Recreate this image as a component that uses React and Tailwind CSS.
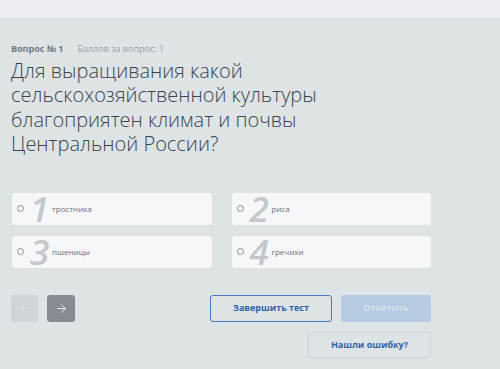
import { ArrowLeft, ArrowRight } from "lucide-react";

const options = [
  { n: "1", text: "тростника" },
  { n: "2", text: "риса" },
  { n: "3", text: "пшеницы" },
  { n: "4", text: "гречихи" },
];

function Option({ n, text }) {
  return (
    <div className="flex h-[32px] items-center rounded-[3px] bg-[#f6f7f8] pl-[5px]">
      <span className="h-[7px] w-[7px] rounded-full border border-[#8a9096]" />
      <span className="ml-[6px] w-[17px] text-center text-[35px] italic font-semibold leading-[30px] text-[#c4c8cc]">
        {n}
      </span>
      <span className="ml-[5px] text-[8px] text-[#6a7076]">{text}</span>
    </div>
  );
}

export default function App() {
  return (
    <div
      className="h-[369px] w-[500px] overflow-hidden bg-[#dee3e6]"
      style={{ fontFamily: '"Open Sans", "Liberation Sans", sans-serif' }}
    >
      {/* top strip */}
      <div className="h-[19px] border-b border-[#d6dbe0] bg-[#ebeef2]" />

      <div className="px-[11px] pt-[23px]">
        <div className="flex items-center gap-[14px] text-[9px]">
          <span className="font-bold text-[#737a82]">Вопрос № 1</span>
          <span className="text-[#9aa0a6]">Баллов за вопрос: 1</span>
        </div>

        <h1 className="mt-[3px] text-[20px] font-light leading-[24.5px] text-[#3b434c]">
          Для выращивания какой
          <br />
          сельскохозяйственной культуры
          <br />
          благоприятен климат и почвы
          <br />
          Центральной России?
        </h1>

        <div className="mt-[36px] grid w-[420px] grid-cols-2 gap-x-[20px] gap-y-[11px] pl-[1px]">
          {options.map((o) => (
            <Option key={o.n} n={o.n} text={o.text} />
          ))}
        </div>

        <div className="mt-[27px] flex w-[420px] items-start">
          <div className="flex gap-[9px]">
            <button className="flex h-[27px] w-[27px] items-center justify-center rounded-[3px] bg-[#d0d5d9] text-[#e2e6e9]">
              <ArrowLeft size={13} strokeWidth={1.5} />
            </button>
            <button className="flex h-[27px] w-[28px] items-center justify-center rounded-[3px] bg-[#868c92] text-white">
              <ArrowRight size={13} strokeWidth={1.5} />
            </button>
          </div>
          <div className="ml-auto flex flex-col items-end gap-[10px]">
            <div className="flex gap-[9px]">
              <button className="h-[27px] w-[122px] rounded-[3px] border border-[#4a7cc0] text-[9px] font-bold text-[#2f62a8]">
                Завершить тест
              </button>
              <button className="h-[27px] w-[90px] rounded-[3px] bg-[#b6cae1] text-[9px] font-bold text-[#d3e0ee]">
                Ответить
              </button>
            </div>
            <button className="h-[26px] w-[123px] rounded-[3px] border border-[#cdd3d8] text-[9px] font-bold text-[#2f62a8]">
              Нашли ошибку?
            </button>
          </div>
        </div>
      </div>
    </div>
  );
}
